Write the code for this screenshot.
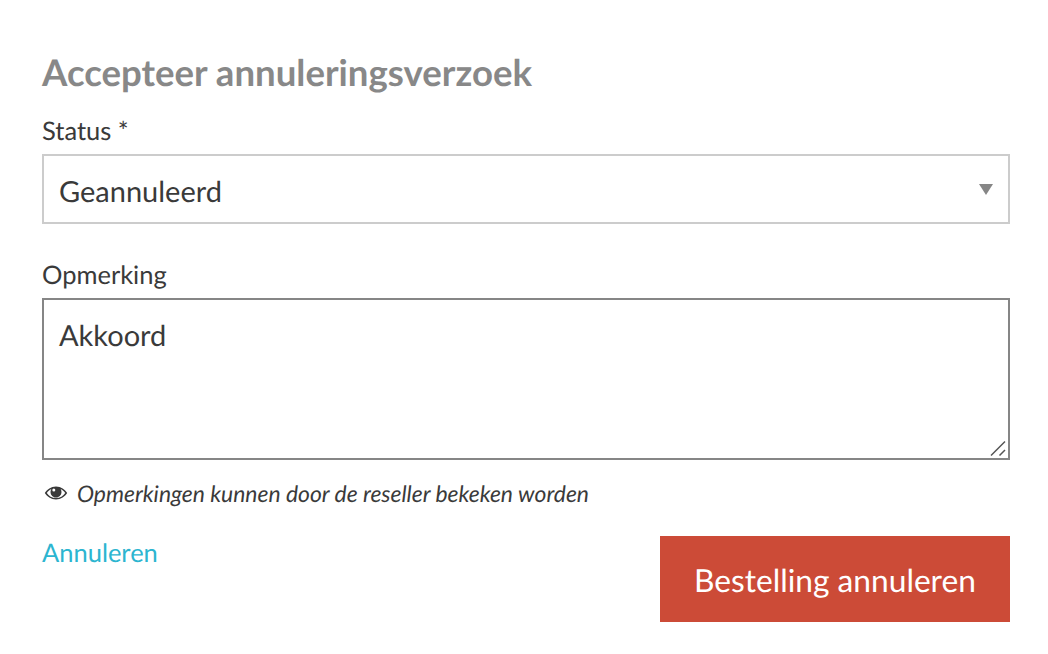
<script>
</script>

<div class="page">
  <h2>Accepteer annuleringsverzoek</h2>
  <label class="lab" for="st">Status *</label>
  <div class="select" id="st">Geannuleerd<span class="caret"></span></div>
  <label class="lab second" for="op">Opmerking</label>
  <div class="area" id="op">Akkoord
    <svg class="grip" width="18" height="18" viewBox="0 0 18 18"><path d="M1 15.500 L15 1.500 M9.500 15.500 L15 10" stroke="#555" stroke-width="1.500" fill="none"/></svg>
  </div>
  <div class="note">
    <svg width="24" height="16" viewBox="0 0 24 16"><path fill-rule="evenodd" fill="#3a3a3a" d="M12 1.500C7 1.500 3 4.500 .8 8 3 11.500 7 14.500 12 14.500S21 11.500 23.200 8C21 4.500 17 1.500 12 1.500zM12 13C8 13 4.700 11 2.800 8 3.900 6.200 5.500 4.800 7.400 3.900 6.800 4.800 6.500 5.800 6.500 7 6.500 10 9 12.500 12 12.500S17.500 10 17.500 7C17.500 5.800 17.200 4.800 16.600 3.900 18.500 4.800 20.100 6.200 21.200 8 19.300 11 16 13 12 13z"/><circle cx="12" cy="7" r="5" fill="#3a3a3a"/><circle cx="9.800" cy="5" r="1.500" fill="#fff"/></svg>
    <em>Opmerkingen kunnen door de reseller bekeken worden</em>
  </div>
  <div class="actions">
    <a href="#x">Annuleren</a>
    <button>Bestelling annuleren</button>
  </div>
</div>

<style>
  :global(body) { margin: 0; background: #fff; }
  .page { width: 968px; padding: 51px 38px 32px 42px; font-family: Lato, sans-serif; color: #3a3a3a; text-rendering: geometricPrecision; }
  h2 { margin: 0 0 23px; font-size: 36.600px; line-height: 42px; font-weight: 700; color: #888; }
  .lab { display: block; font-size: 25.500px; line-height: 30px; color: #3a3a3a; }
  .second { margin-top: 36px; }
  .select { box-sizing: border-box; height: 70px; margin-top: 8px; border: 2px solid #ccc; padding: 4px 15px 0; font-size: 29px; display: flex; justify-content: space-between; align-items: center; color: #3a3a3a; }
  .caret { width: 0; height: 0; border-left: 7px solid transparent; border-right: 7px solid transparent; border-top: 11px solid #868686; margin: -4px 0 0; }
  .area { position: relative; box-sizing: border-box; height: 162px; margin-top: 8px; border: 2px solid #868686; padding: 16px 15px; font-size: 29px; line-height: 40px; }
  .grip { position: absolute; right: 0; bottom: 0; }
  .note { display: flex; align-items: center; gap: 9px; margin-top: 18px; padding-left: 2px; font-size: 22.900px; line-height: 30px; color: #3a3a3a; }
  .actions { display: flex; justify-content: space-between; align-items: flex-start; margin-top: 28px; }
  a { font-size: 25.500px; line-height: 30px; color: #2cb5d0; text-decoration: none; margin-top: 2px; }
  button { width: 350px; height: 86px; border: 0; padding: 2px 0 0; background: #cc4b37; color: #fff; font-family: inherit; font-size: 31.700px; text-rendering: geometricPrecision; }
</style>
